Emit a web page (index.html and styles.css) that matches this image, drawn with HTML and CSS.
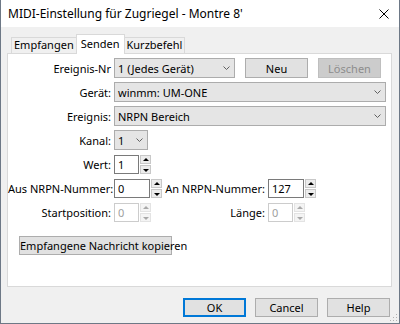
FILE: index.html
```html
<!DOCTYPE html>
<html lang="de">
<head>
    <meta charset="UTF-8">
    <title>MIDI-Einstellung</title>
    <link rel="stylesheet" href="styles.css">
</head>
<body>
    <div class="window">
        <div class="titlebar">
            <span class="title">MIDI-Einstellung für Zugriegel - Montre 8'</span>
            <svg class="close" width="10" height="10" viewBox="0 0 10 10"><path d="M0.5 0.5L9.5 9.5M9.5 0.5L0.5 9.5" stroke="#000" stroke-width="1"/></svg>
        </div>
        <div class="client">
            <div class="tabs">
                <div class="tab">Empfangen</div>
                <div class="tab active">Senden</div>
                <div class="tab">Kurzbefehl</div>
            </div>
            <div class="panel">
                <div class="row">
                    <label class="lbl">Ereignis-Nr</label>
                    <div class="select w-nr"><span>1 (Jedes Gerät)</span><svg class="chev" width="7" height="4" viewBox="0 0 7 4"><path d="M0.5 0.5L3.5 3.5L6.5 0.5" fill="none" stroke="#606060"/></svg></div>
                    <button class="btn btn-new">Neu</button>
                    <button class="btn" disabled>Löschen</button>
                </div>
                <div class="row">
                    <label class="lbl">Gerät:</label>
                    <div class="select w-full"><span>winmm: UM-ONE</span><svg class="chev" width="7" height="4" viewBox="0 0 7 4"><path d="M0.5 0.5L3.5 3.5L6.5 0.5" fill="none" stroke="#606060"/></svg></div>
                </div>
                <div class="row">
                    <label class="lbl">Ereignis:</label>
                    <div class="select w-full"><span>NRPN Bereich</span><svg class="chev" width="7" height="4" viewBox="0 0 7 4"><path d="M0.5 0.5L3.5 3.5L6.5 0.5" fill="none" stroke="#606060"/></svg></div>
                </div>
                <div class="row">
                    <label class="lbl">Kanal:</label>
                    <div class="select w-ch"><span>1</span><svg class="chev" width="7" height="4" viewBox="0 0 7 4"><path d="M0.5 0.5L3.5 3.5L6.5 0.5" fill="none" stroke="#606060"/></svg></div>
                </div>
                <div class="row">
                    <label class="lbl">Wert:</label>
                    <div class="num">
                        <input class="field w-sm" type="text" value="1">
                        <div class="spin"><span class="up"></span><span class="down"></span></div>
                    </div>
                </div>
                <div class="row">
                    <label class="lbl">Aus NRPN-Nummer:</label>
                    <div class="group">
                        <div class="num">
                            <input class="field w-md" type="text" value="0">
                            <div class="spin"><span class="up"></span><span class="down"></span></div>
                        </div>
                    </div>
                    <label class="lbl2">An NRPN-Nummer:</label>
                    <div class="num">
                        <input class="field w-md" type="text" value="127">
                        <div class="spin"><span class="up"></span><span class="down"></span></div>
                    </div>
                </div>
                <div class="row">
                    <label class="lbl">Startposition:</label>
                    <div class="group">
                        <div class="num off">
                            <input class="field w-sm" type="text" value="0" disabled>
                            <div class="spin"><span class="up"></span><span class="down"></span></div>
                        </div>
                    </div>
                    <label class="lbl2">Länge:</label>
                    <div class="num off">
                        <input class="field w-sm" type="text" value="0" disabled>
                        <div class="spin"><span class="up"></span><span class="down"></span></div>
                    </div>
                </div>
                <button class="btn btn-copy">Empfangene Nachricht kopieren</button>
            </div>
            <div class="actions">
                <button class="btn btn-default">OK</button>
                <button class="btn">Cancel</button>
                <button class="btn">Help</button>
            </div>
            <svg class="grip" width="8" height="8" viewBox="0 0 8 8">
                <rect x="6" y="0" width="1" height="1" fill="#b0b0b0"/>
                <rect x="3" y="3" width="1" height="1" fill="#b0b0b0"/>
                <rect x="6" y="3" width="1" height="1" fill="#b0b0b0"/>
                <rect x="0" y="6" width="1" height="1" fill="#b0b0b0"/>
                <rect x="3" y="6" width="1" height="1" fill="#b0b0b0"/>
                <rect x="6" y="6" width="1" height="1" fill="#b0b0b0"/>
            </svg>
        </div>
    </div>
</body>
</html>
```
FILE: styles.css
```css
body {
    margin: 0;
    font-family: "Segoe UI", "Noto Sans", sans-serif;
    font-size: 11px;
    color: #000;
}
.window {
    width: 400px;
    height: 324px;
    box-sizing: border-box;
    border: 1px solid #6d7886;
    border-top: none;
    background: #f0f0f0;
    display: flex;
    flex-direction: column;
}
.titlebar {
    height: 27px;
    flex: none;
    background: #fff;
    display: flex;
    align-items: center;
    justify-content: space-between;
    padding: 0 10px 0 7px;
    font-size: 12px;
}
.close {
    margin-top: 1px;
}
.client {
    flex: 1;
    position: relative;
    padding: 7px 0 0 6px;
}
.tabs {
    display: flex;
    align-items: flex-end;
    height: 19px;
    margin-left: 4px;
}
.tab {
    height: 15px;
    line-height: 14px;
    padding: 0 2px;
    border: 1px solid #d9d9d9;
    border-bottom: none;
    margin-right: -1px;
    background: #f0f0f0;
}
.tab.active {
    position: relative;
    height: 19px;
    margin-bottom: -1px;
    padding: 0 4px;
    line-height: 17px;
    background: #fff;
    z-index: 1;
}
.panel {
    width: 385px;
    height: 234px;
    box-sizing: border-box;
    border: 1px solid #d9d9d9;
    background: #fff;
    padding-top: 4px;
}
.row {
    display: flex;
    align-items: center;
    height: 20px;
    margin-bottom: 4px;
}
.lbl {
    width: 103px;
    margin-right: 3px;
    text-align: right;
    white-space: nowrap;
}
.lbl2 {
    width: 101px;
    margin-right: 3px;
    text-align: right;
    white-space: nowrap;
}
.group {
    width: 50px;
}
.select {
    height: 20px;
    box-sizing: border-box;
    border: 1px solid #acacac;
    background: #e5e5e5;
    display: flex;
    align-items: center;
    justify-content: space-between;
    padding: 0 4px 0 3px;
}
.w-nr { width: 121px; }
.w-full { width: 272px; }
.w-ch { width: 34px; }
.btn {
    font-family: inherit;
    font-size: 11px;
    color: #000;
    height: 20px;
    width: 63px;
    box-sizing: border-box;
    border: 1px solid #adadad;
    background: #e1e1e1;
    padding: 0;
    white-space: nowrap;
}
.btn:disabled {
    background: #cccccc;
    border-color: #bfbfbf;
    color: #8d8d8d;
}
.btn-new {
    margin: 0 10px;
}
.btn-copy {
    width: 153px;
    height: 19px;
    margin: 10px 0 0 11px;
}
.num {
    display: flex;
    align-items: stretch;
    height: 19px;
}
.field {
    font-family: inherit;
    font-size: 11px;
    box-sizing: border-box;
    height: 19px;
    margin: 0;
    padding: 0 0 0 3px;
    border: 1px solid #7a7a7a;
    background: #fff;
    color: #000;
    outline: none;
}
.w-sm { width: 25px; }
.w-md { width: 36px; }
.spin {
    width: 11px;
    margin-left: 1px;
    display: flex;
    flex-direction: column;
    gap: 1px;
}
.spin span {
    flex: 1;
    position: relative;
    border: 1px solid #c8c8c8;
    background: #ececec;
}
.spin span::after {
    content: "";
    position: absolute;
    left: 2px;
    top: 2px;
    border-left: 3px solid transparent;
    border-right: 3px solid transparent;
}
.spin .up::after {
    border-bottom: 3px solid #000;
}
.spin .down::after {
    top: 3px;
    border-top: 3px solid #000;
}
.off .field {
    border-color: #cccccc;
    color: #a0a0a0;
    background: #fff;
}
.off .spin span {
    border-color: #e3e3e3;
    background: #f4f4f4;
}
.off .spin .up::after { border-bottom-color: #a8a8a8; }
.off .spin .down::after { border-top-color: #a8a8a8; }
.actions {
    display: flex;
    justify-content: flex-end;
    gap: 9px;
    margin: 11px 9px 0 0;
}
.actions .btn {
    height: 19px;
}
.btn-default {
    border: 2px solid #0078d7;
}
.grip {
    position: absolute;
    right: 1px;
    bottom: 1px;
}
```
